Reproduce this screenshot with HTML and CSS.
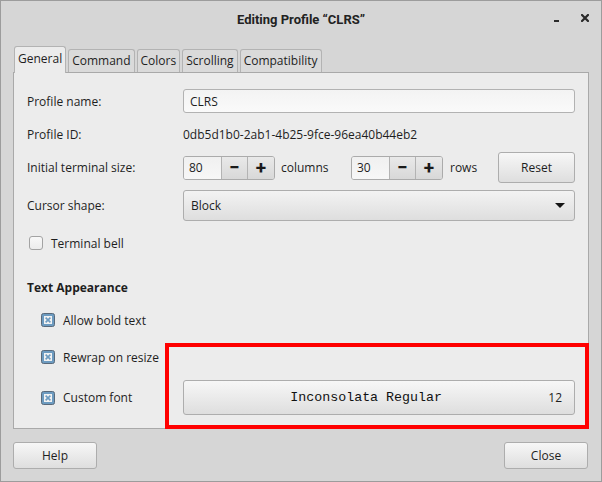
FILE: index.html
```html
<!DOCTYPE html>
<html>
<head>
<meta charset="utf-8">
<link rel="stylesheet" href="styles.css">
</head>
<body>
<div class="window">
  <div class="titlebar">
    <div class="title">Editing Profile “CLRS”</div>
    <div class="wbtns">
      <span class="wmin"></span>
      <svg class="wclose" width="8" height="8" viewBox="0 0 8 8"><path d="M1 1 L7 7 M7 1 L1 7" stroke="#2a2a2a" stroke-width="2.2" stroke-linecap="square"/></svg>
    </div>
  </div>
  <div class="body">
    <div class="tabs">
      <div class="tab active">General</div>
      <div class="tab">Command</div>
      <div class="tab">Colors</div>
      <div class="tab">Scrolling</div>
      <div class="tab">Compatibility</div>
    </div>
    <div class="panel">
      <div class="row r1">
        <div class="label">Profile name:</div>
        <div class="ctl"><div class="input">CLRS</div></div>
      </div>
      <div class="row r2">
        <div class="label">Profile ID:</div>
        <div class="ctl">0db5d1b0-2ab1-4b25-9fce-96ea40b44eb2</div>
      </div>
      <div class="row r3">
        <div class="label">Initial terminal size:</div>
        <div class="ctl">
          <div class="spin"><div class="sfield">80</div><div class="sbtn">−</div><div class="sbtn last">+</div></div>
          <span class="unit">columns</span>
          <div class="spin"><div class="sfield">30</div><div class="sbtn">−</div><div class="sbtn last">+</div></div>
          <span class="unit2">rows</span>
          <div class="btn reset">Reset</div>
        </div>
      </div>
      <div class="row r4">
        <div class="label">Cursor shape:</div>
        <div class="ctl"><div class="combo"><span>Block</span><span class="arrow"></span></div></div>
      </div>
      <div class="row r5">
        <span class="cb"></span><span class="cblabel">Terminal bell</span>
      </div>
      <div class="row r6"><span class="section">Text Appearance</span></div>
      <div class="row r7 indent">
        <svg class="cbx" width="14" height="14" viewBox="0 0 14 14"><rect x="0.5" y="0.5" width="13" height="13" rx="2" fill="#6d9bc0" stroke="#59697a"/><rect x="3" y="3" width="8" height="8" fill="#f2f2f2"/><path d="M4.6 4.6 L9.4 9.4 M9.4 4.6 L4.6 9.4" stroke="#6d9bc0" stroke-width="1.6"/></svg>
        <span class="cblabel">Allow bold text</span>
      </div>
      <div class="row r8 indent">
        <svg class="cbx" width="14" height="14" viewBox="0 0 14 14"><rect x="0.5" y="0.5" width="13" height="13" rx="2" fill="#6d9bc0" stroke="#59697a"/><rect x="3" y="3" width="8" height="8" fill="#f2f2f2"/><path d="M4.6 4.6 L9.4 9.4 M9.4 4.6 L4.6 9.4" stroke="#6d9bc0" stroke-width="1.6"/></svg>
        <span class="cblabel">Rewrap on resize</span>
      </div>
      <div class="row r9">
        <div class="label indentlabel">
          <svg class="cbx" width="14" height="14" viewBox="0 0 14 14"><rect x="0.5" y="0.5" width="13" height="13" rx="2" fill="#6d9bc0" stroke="#59697a"/><rect x="3" y="3" width="8" height="8" fill="#f2f2f2"/><path d="M4.6 4.6 L9.4 9.4 M9.4 4.6 L4.6 9.4" stroke="#6d9bc0" stroke-width="1.6"/></svg>
          <span class="cblabel">Custom font</span>
        </div>
        <div class="ctl"><div class="btn fontbtn"><span class="fname">Inconsolata Regular</span><span class="fsize">12</span></div></div>
      </div>
      <div class="highlight"></div>
    </div>
    <div class="footer">
      <div class="btn fbtn">Help</div>
      <div class="btn fbtn">Close</div>
    </div>
  </div>
</div>
</body>
</html>
```

FILE: styles.css
```css
* { box-sizing: border-box; }
html, body { margin: 0; padding: 0; }
body {
  width: 602px; height: 482px;
  font-family: "Open Sans", "Noto Sans", sans-serif;
  font-size: 12px;
  color: #1e1e1e;
  background: #d6d6d6;
}
.window {
  width: 602px; height: 482px;
  border: 1px solid #9c9c9c;
  background: #d6d6d6;
  display: flex; flex-direction: column;
}
.titlebar {
  height: 35px;
  position: relative;
  display: flex; align-items: center; justify-content: center;
}
.title { font-family: Roboto, sans-serif; font-weight: bold; font-size: 13px; color: #222; margin-top: 1px; }
.wbtns { position: absolute; right: 12px; top: 13px; display: flex; align-items: center; gap: 22px; }
.wmin { width: 5px; height: 2px; background: #2a2a2a; margin-top: 6px; }
.wclose { display: block; }
.body { padding: 10px 12px 0 12px; display: flex; flex-direction: column; }
.tabs { display: flex; align-items: flex-end; height: 26px; padding-left: 1px; gap: 2px; }
.tab {
  height: 23px;
  padding: 0 3px;
  background: #dadada;
  border: 1px solid #b3b3b3;
  border-bottom: none;
  border-radius: 3px 3px 0 0;
  display: flex; align-items: center;
  line-height: 1;
}
.tab.active {
  height: 27px;
  background: #ececec;
  position: relative; z-index: 2;
  margin-bottom: -1px;
  padding: 0 3px 2px 3px;
}
.panel {
  position: relative;
  height: 357px;
  background: #ececec;
  border: 1px solid #a9a9a9;
  padding: 12px 13px 0 13px;
  display: flex; flex-direction: column;
}
.row { display: flex; align-items: center; }
.r1 { height: 32px; }
.r2 { height: 34px; }
.r3 { height: 33px; }
.r4 { height: 43px; }
.r5 { height: 32px; padding-left: 2px; }
.r6 { height: 32px; margin-top: 12px; }
.r7 { height: 34px; }
.r8 { height: 40px; }
.r9 { height: 41px; }
.label { width: 156px; flex: none; }
.ctl { flex: 1; display: flex; align-items: center; }
.input {
  width: 100%; height: 24px;
  border: 1px solid #b2b2b2; border-radius: 3px;
  background: linear-gradient(#f3f3f3, #fafafa);
  padding: 0 6px; display: flex; align-items: center;
}
.spin { display: flex; height: 24px; border: 1px solid #ababab; border-radius: 3px; overflow: hidden; }
.sfield { width: 38px; background: linear-gradient(#f0f0f0, #f7f7f7); padding-left: 5px; display: flex; align-items: center; border-right: 1px solid #b3b3b3; }
.sbtn {
  width: 26px; display: flex; align-items: center; justify-content: center;
  background: linear-gradient(#e9e9e9, #d8d8d8);
  border-right: 1px solid #b3b3b3;
  font-family: Roboto, sans-serif;
  font-weight: bold; font-size: 19px; color: #1a1a1a; line-height: 1;
}
.sbtn.last { border-right: none; }
.unit { margin-left: 6px; width: 70px; }
.unit2 { margin-left: 7px; }
.btn {
  border: 1px solid #adadad; border-radius: 3px;
  background: linear-gradient(#f7f7f7, #dedede);
  display: flex; align-items: center; justify-content: center;
}
.reset { margin-left: auto; width: 77px; height: 31px; }
.combo {
  width: 100%; height: 31px;
  border: 1px solid #adadad; border-radius: 3px;
  background: linear-gradient(#f3f3f3, #dedede);
  display: flex; align-items: center; justify-content: space-between;
  padding: 0 9px 0 7px;
}
.arrow { width: 0; height: 0; border-left: 5px solid transparent; border-right: 5px solid transparent; border-top: 5px solid #151515; }
.cb { width: 14px; height: 14px; border: 1px solid #a3a3a3; border-radius: 3px; background: linear-gradient(#f8f8f8, #ececec); }
.cblabel { margin-left: 8px; }
.section { font-weight: bold; }
.indent { padding-left: 14px; }
.indentlabel { padding-left: 14px; display: flex; align-items: center; }
.cbx { display: block; flex: none; }
.fontbtn { width: 100%; height: 35px; justify-content: space-between; }
.fname { flex: 1; text-align: center; font-family: "Liberation Mono", "DejaVu Sans Mono", monospace; font-size: 13.3px; color: #111; }
.fsize { padding-right: 12px; }
.highlight {
  position: absolute;
  left: 151px; top: 270px;
  width: 424px; height: 86px;
  border: 4px solid #ff0000;
  z-index: 5;
}
.footer { display: flex; justify-content: space-between; margin-top: 13px; padding-right: 1px; }
.fbtn { width: 84px; height: 27px; }
```
